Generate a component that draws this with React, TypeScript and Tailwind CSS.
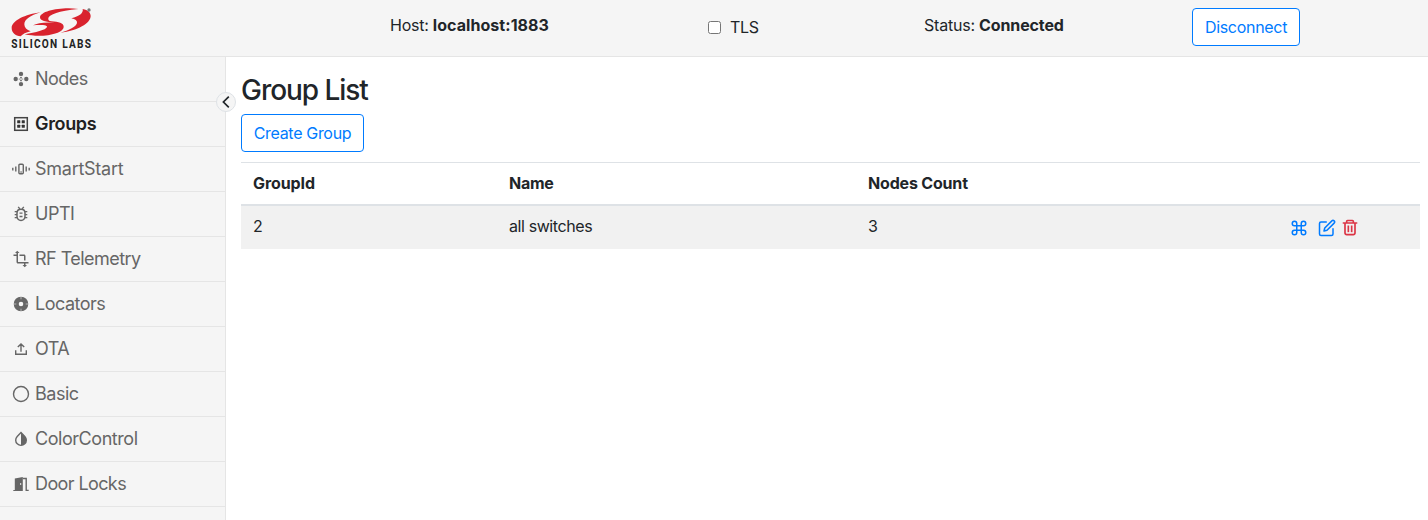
import React from "react";
import { FiCommand, FiEdit } from "react-icons/fi";
import { CgTrash } from "react-icons/cg";
import { MdOutlineTransform } from "react-icons/md";

function Svg({ children }: { children: React.ReactNode }) {
  return (
    <svg width="18" height="18" viewBox="0 0 18 18" fill="none" stroke="currentColor" strokeWidth="1.4" className="shrink-0">
      {children}
    </svg>
  );
}

const NodesIcon = () => (
  <Svg>
    <g fill="currentColor" stroke="none">
      <circle cx="9" cy="3.9" r="2.2" />
      <circle cx="9" cy="14.1" r="2.2" />
      <circle cx="3.7" cy="9" r="2.2" />
      <circle cx="14.3" cy="9" r="2.2" />
      <circle cx="9" cy="7.7" r="0.9" />
      <circle cx="9" cy="10.4" r="0.9" />
      <circle cx="7.3" cy="9" r="0.6" />
      <circle cx="10.7" cy="9" r="0.6" />
    </g>
  </Svg>
);

const GroupsIcon = () => (
  <Svg>
    <rect x="2.7" y="2.7" width="12.6" height="12.6" stroke="#444444" strokeWidth="1.5" />
    <g fill="#333333" stroke="none">
      <rect x="5.2" y="5.2" width="3.1" height="3.1" rx="0.5" />
      <rect x="9.7" y="5.2" width="3.1" height="3.1" rx="0.5" />
      <rect x="5.2" y="9.7" width="3.1" height="3.1" rx="0.5" />
      <rect x="9.7" y="9.7" width="3.1" height="3.1" rx="0.5" />
    </g>
  </Svg>
);

const SmartIcon = () => (
  <Svg>
    <rect x="6.9" y="4.3" width="4.4" height="9.4" rx="1" strokeWidth="1.4" />
    <path d="M0.8 7.7v2.8M3.8 6.5v5M14.2 6.5v5M17.2 7.7v2.8" strokeWidth="1.4" />
    <path d="M8.2 12h1.8" strokeWidth="1" />
  </Svg>
);

const BugIcon = () => (
  <Svg>
    <path d="M9 4.300c-2.400 0-4 1.500-4 3.700v3.200c0 2.400 1.700 4.200 4 4.200s4-1.800 4-4.200V8c0-2.200-1.600-3.700-4-3.700z" strokeWidth="1.500" />
    <path d="M6.200 1.900l1.700 2M11.800 1.900l-1.700 2M2.700 6.600h2.500M2.700 9.600h2.300M2.700 12.600h2.500M12.800 6.600h2.500M13 9.600h2.300M12.800 12.600h2.500M7.500 8.100h3M7.500 11.500h3" strokeWidth="1.400" />
  </Svg>
);

const LocatorIcon = () => (
  <Svg>
    <circle cx="9" cy="9" r="4.8" strokeWidth="5" />
    <path d="M9 1.500v2.800M9 13.700v2.800M1.500 9h2.800M13.700 9h2.800" stroke="#f5f5f5" strokeOpacity="0.55" strokeWidth="1" />
  </Svg>
);

const UploadIcon = () => (
  <Svg>
    <path d="M3.700 10.300v3.900h10.600v-3.900M9 11.700V4.200M5.800 7.100l3.200-3.200 3.200 3.200" strokeWidth="1.400" />
  </Svg>
);

const CircleIcon = () => (
  <Svg>
    <circle cx="9" cy="9" r="7.5" strokeWidth="1.4" />
  </Svg>
);

const DropIcon = () => (
  <Svg>
    <path d="M9 2.500L5.200 6.400a5.300 5.300 0 1 0 7.600 0z" strokeWidth="1.400" />
    <path d="M9 2.500l3.800 3.900A5.300 5.300 0 0 1 9 15.300z" fill="currentColor" stroke="none" />
  </Svg>
);

const DoorIcon = () => (
  <Svg>
    <path
      d="M1.300 15h1.500V3.400L10.800 1.900v14.200H1.300zM8 8.300v1.500h1.200V8.300z"
      fill="currentColor"
      fillRule="evenodd"
      stroke="none"
    />
    <path d="M10.800 3.500h3.400v11.900h2.500" strokeWidth="1.400" />
  </Svg>
);

const items = [
  { label: "Nodes", icon: <NodesIcon />, cls: "tracking-[-0.56px]" },
  { label: "Groups", icon: <GroupsIcon />, cls: "font-semibold tracking-[-0.35px]" },
  { label: "SmartStart", icon: <SmartIcon />, cls: "tracking-[-0.26px]" },
  { label: "UPTI", icon: <BugIcon />, cls: "tracking-[-0.5px]" },
  { label: "RF Telemetry", icon: <MdOutlineTransform size={18} className="-mt-px shrink-0" />, cls: "tracking-[-0.54px]" },
  { label: "Locators", icon: <LocatorIcon />, cls: "tracking-[-0.5px]" },
  { label: "OTA", icon: <UploadIcon />, cls: "tracking-[-0.5px]" },
  { label: "Basic", icon: <CircleIcon />, cls: "tracking-[-0.5px]" },
  { label: "ColorControl", icon: <DropIcon />, cls: "tracking-[-0.45px]" },
  { label: "Door Locks", icon: <DoorIcon />, cls: "tracking-[-0.6px]" },
];

function Logo() {
  return (
    <svg width="110" height="56" viewBox="0 0 330 168" className="shrink-0">
      <g fill="#d9232e">
        <path d="M122 37C76 43 35 62 35 84c0 14 11 23 27 25 6-7 16-12 30-15-12-4-19-11-19-21 0-14 17-26 49-36z" />
        <path d="M235 27c-52-7-113 6-115 25 0 10 17 14 45 16-32-2-54 1-66 8 30-3 44 0 42 5-3 9-34 16-67 22 54 12 117-2 117-23 0-11-15-14-37-16-8-1-10-5-9-10 3-10 30-21 90-27z" />
        <path d="M248 27c3 12-10 22-34 28 12 3 18 7 17 14-2 11-24 22-50 29 52-6 91-28 91-50 0-10-8-18-24-21z" />
      </g>
      <circle cx="267" cy="30" r="5" fill="#777777" />
      <text
        x="0"
        y="143"
        transform="translate(34 0) scale(0.8 1)"
        fill="#222222"
        fontFamily="Roboto, sans-serif"
        fontSize="38"
        fontWeight="700"
        textLength="299"
        lengthAdjust="spacing"
      >
        SILICON LABS
      </text>
    </svg>
  );
}

export default function App() {
  return (
    <div className="flex h-[520px] w-[1428px] flex-col overflow-hidden bg-white font-['Inter',sans-serif] text-base leading-6 text-[#212529]">
      <header className="flex h-[57px] shrink-0 items-start border-b border-[#e5e5e5] bg-[#f5f5f5]">
        <Logo />
        <div className="ml-[280px] mt-[13px] w-[318px] whitespace-nowrap tracking-[-0.25px]">
          Host: <b className="font-bold tracking-[0.06px]">localhost:1883</b>
        </div>
        <label className="mt-[15px] flex w-[216px] items-center tracking-[-0.3px]">
          <input type="checkbox" className="m-0 mr-[9px] h-[13px] w-[13px]" />
          TLS
        </label>
        <div className="mt-[13px] w-[268px] whitespace-nowrap tracking-[-0.22px]">
          Status: <b className="font-bold tracking-[-0.12px]">Connected</b>
        </div>
        <button className="mt-2 h-[38px] w-[108px] whitespace-nowrap rounded-[4px] border border-[#007bff] bg-white tracking-[-0.3px] text-[#007bff]">
          Disconnect
        </button>
      </header>

      <div className="flex min-h-0 flex-1">
        <aside className="relative w-[226px] shrink-0 border-r border-[#e5e5e5] bg-[#f5f5f5]">
          <nav>
            {items.map((item) => (
              <a
                key={item.label}
                className={
                  "flex h-[45px] items-center gap-[5px] border-b border-[#e5e5e5] pl-3 text-[18px] " +
                  (item.label === "Groups" ? "text-[#212121]" : "text-[#666666]")
                }
              >
                {item.icon}
                <span className={"whitespace-nowrap " + item.cls}>{item.label}</span>
              </a>
            ))}
          </nav>
          <button className="absolute -right-[11px] top-[35px] flex h-5 w-5 items-center justify-center rounded-full border border-[#dee2e6] bg-[#f5f5f5]">
            <svg width="18" height="18" viewBox="0 0 18 18" fill="none" stroke="#212529" strokeWidth="1.7" className="shrink-0">
              <path d="M11.800 3.600L6.400 9l5.400 5.400" />
            </svg>
          </button>
        </aside>

        <main className="flex-1 pl-[15px] pr-2 pt-4">
          <h1 className="pt-px text-[28px] font-medium leading-[33px] tracking-[-1.05px]">Group List</h1>
          <button className="mt-[7px] block h-[38px] w-[123px] whitespace-nowrap rounded-[4px] border border-[#007bff] tracking-[-0.32px] text-[#007bff]">
            Create Group
          </button>
          <table className="mt-[10px] w-[1179px] table-fixed border-separate border-spacing-0 text-left">
            <colgroup>
              <col className="w-[256px]" />
              <col className="w-[359px]" />
              <col className="w-[422px]" />
              <col />
            </colgroup>
            <thead>
              <tr className="h-[44px]">
                <th className="border-b-2 border-t border-[#dee2e6] px-3 pb-[2px] pt-0 font-bold tracking-[-0.1px]">GroupId</th>
                <th className="border-b-2 border-t border-[#dee2e6] px-3 pb-[2px] pt-0 font-bold tracking-[-0.25px]">Name</th>
                <th className="border-b-2 border-t border-[#dee2e6] px-3 pb-[2px] pt-0 font-bold tracking-[-0.18px]">Nodes Count</th>
                <th className="border-b-2 border-t border-[#dee2e6]" />
              </tr>
            </thead>
            <tbody>
              <tr className="h-[43px] bg-[#f1f1f1]">
                <td className="px-3 pb-[3px] pt-0">2</td>
                <td className="px-3 pb-[3px] pt-0 tracking-[-0.4px]">all switches</td>
                <td className="px-3 pb-[3px] pt-0">3</td>
                <td className="px-3 py-0">
                  <div className="flex items-center">
                    <FiCommand size={18} color="#007bff" />
                    <FiEdit size={18} color="#007bff" className="ml-[10px]" />
                    <CgTrash size={20} color="#dc3545" className="ml-[4px]" />
                  </div>
                </td>
              </tr>
            </tbody>
          </table>
        </main>
      </div>
    </div>
  );
}
